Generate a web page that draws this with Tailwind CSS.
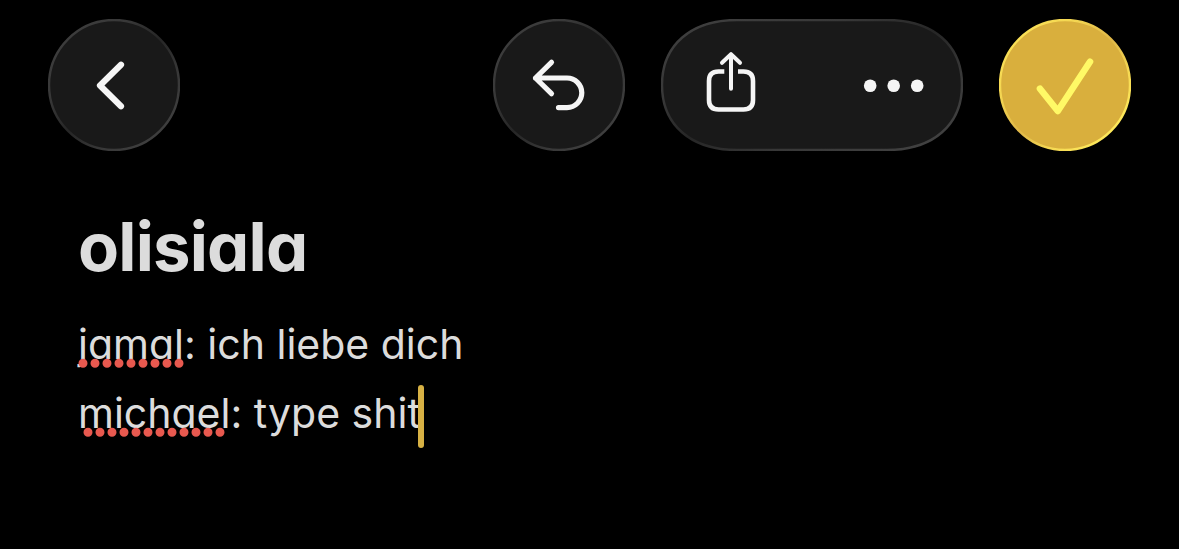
<!DOCTYPE html>
<html lang="de">
<head>
    <meta charset="UTF-8">
    <meta name="viewport" content="width=device-width, initial-scale=1.0">
    <title>olisiala</title>
    <script src="https://cdn.jsdelivr.net/npm/@tailwindcss/browser@4"></script>
</head>
<body class="h-screen overflow-hidden bg-black font-['Inter',sans-serif] text-[#dcdcdc]">
    <!-- Rim gradients shared by the toolbar buttons -->
    <svg class="absolute size-0">
        <defs>
            <linearGradient id="rim" x1="0" y1="0" x2="1" y2="1">
                <stop offset="0" stop-color="#404040" />
                <stop offset="0.3" stop-color="#383838" />
                <stop offset="0.5" stop-color="#262626" />
                <stop offset="0.7" stop-color="#383838" />
                <stop offset="1" stop-color="#444" />
            </linearGradient>
            <linearGradient id="rim-gold" x1="0" y1="0" x2="1" y2="1">
                <stop offset="0.1" stop-color="#fbe257" />
                <stop offset="0.3" stop-color="#f3d552" />
                <stop offset="0.5" stop-color="#dfb748" />
                <stop offset="0.7" stop-color="#f6da54" />
                <stop offset="0.9" stop-color="#ffec5c" />
            </linearGradient>
        </defs>
    </svg>

    <!-- Toolbar -->
    <header class="flex items-center gap-9 px-12 pt-[19px]">
        <button class="mr-auto size-[132px]" aria-label="Back">
            <svg class="size-full" viewBox="0 0 132 132" fill="none">
                <circle cx="66" cy="66" r="65" fill="#191919" stroke="url(#rim)" stroke-width="2.4" />
                <path d="M73 45.8 52 66.5 73 87.3" stroke="#f5f5f5" stroke-width="6.2" stroke-linecap="round" stroke-linejoin="round" />
            </svg>
        </button>

        <button class="size-[132px]" aria-label="Undo">
            <svg class="size-full" viewBox="0 0 132 132" fill="none">
                <circle cx="66" cy="66" r="65" fill="#191919" stroke="url(#rim)" stroke-width="2.4" />
                <path d="M58.5 43.3 42.5 59 58.5 74.7M42.5 59H74a14.8 14.8 0 0 1 0 29.6H65.5" stroke="#f5f5f5" stroke-width="5.2" stroke-linecap="round" stroke-linejoin="round" />
            </svg>
        </button>

        <div class="h-[132px] w-[302px]">
            <svg class="size-full" viewBox="0 0 302 132" fill="none">
                <path d="M76 1H226C272 1 301 26 301 66S272 131 226 131H76C30 131 1 106 1 66S30 1 76 1Z" fill="#191919" stroke="url(#rim)" stroke-width="2.4" />
                <!-- share -->
                <g stroke="#f5f5f5" stroke-width="4.6">
                    <path d="M63.3 52.5H57.5Q48 52.5 48 62V81Q48 90.5 57.5 90.5H82.5Q92 90.5 92 81V62Q92 52.5 82.5 52.5H77" />
                    <path d="M70 35.5V69.8M61 43.8 70 35.2 79 43.8" stroke-width="4" stroke-linecap="round" stroke-linejoin="round" />
                </g>
                <!-- more -->
                <g fill="#f5f5f5">
                    <circle cx="209.2" cy="66.7" r="6.3" />
                    <circle cx="232.7" cy="66.7" r="6.3" />
                    <circle cx="256.2" cy="66.7" r="6.3" />
                </g>
            </svg>
        </div>

        <button class="size-[132px]" aria-label="Done">
            <svg class="size-full" viewBox="0 0 132 132" fill="none">
                <circle cx="66" cy="66" r="65" fill="#d9af3d" stroke="url(#rim-gold)" stroke-width="2.4" />
                <path d="M41 69.7 58.8 92 91 42.8" stroke="#fff966" stroke-width="6.6" stroke-linecap="round" stroke-linejoin="round" />
            </svg>
        </button>
    </header>

    <!-- Note -->
    <main class="px-[78px] pt-14 [font-feature-settings:'cv11']">
        <h1 class="h-20 text-[67px] leading-[80px] font-bold tracking-[-0.8px]">olisiala</h1>
        <div class="mt-[23px] text-[41px] leading-[69px] whitespace-nowrap">
            <p class="h-[69px]"><span class="relative">jamal<svg class="absolute top-[39px] left-0 h-[10px] w-[108px]" viewBox="0 0 108 10"><path d="M5 5.3H102" stroke="#e8594f" stroke-width="9" stroke-linecap="round" stroke-dasharray="0 12" /></svg></span>: ich liebe dich</p>
            <p class="flex h-[69px] items-center"><span class="relative">michael<svg class="absolute top-[48px] left-[5px] h-[10px] w-[142px]" viewBox="0 0 142 10"><path d="M5 5.3H138" stroke="#e8594f" stroke-width="9" stroke-linecap="round" stroke-dasharray="0 12" /></svg></span><span class="whitespace-pre">: type shit</span><span class="mt-1.5 -ml-[3px] h-[63px] w-1.5 rounded-full bg-[#d7b144]"></span></p>
        </div>
    </main>
</body>
</html>
